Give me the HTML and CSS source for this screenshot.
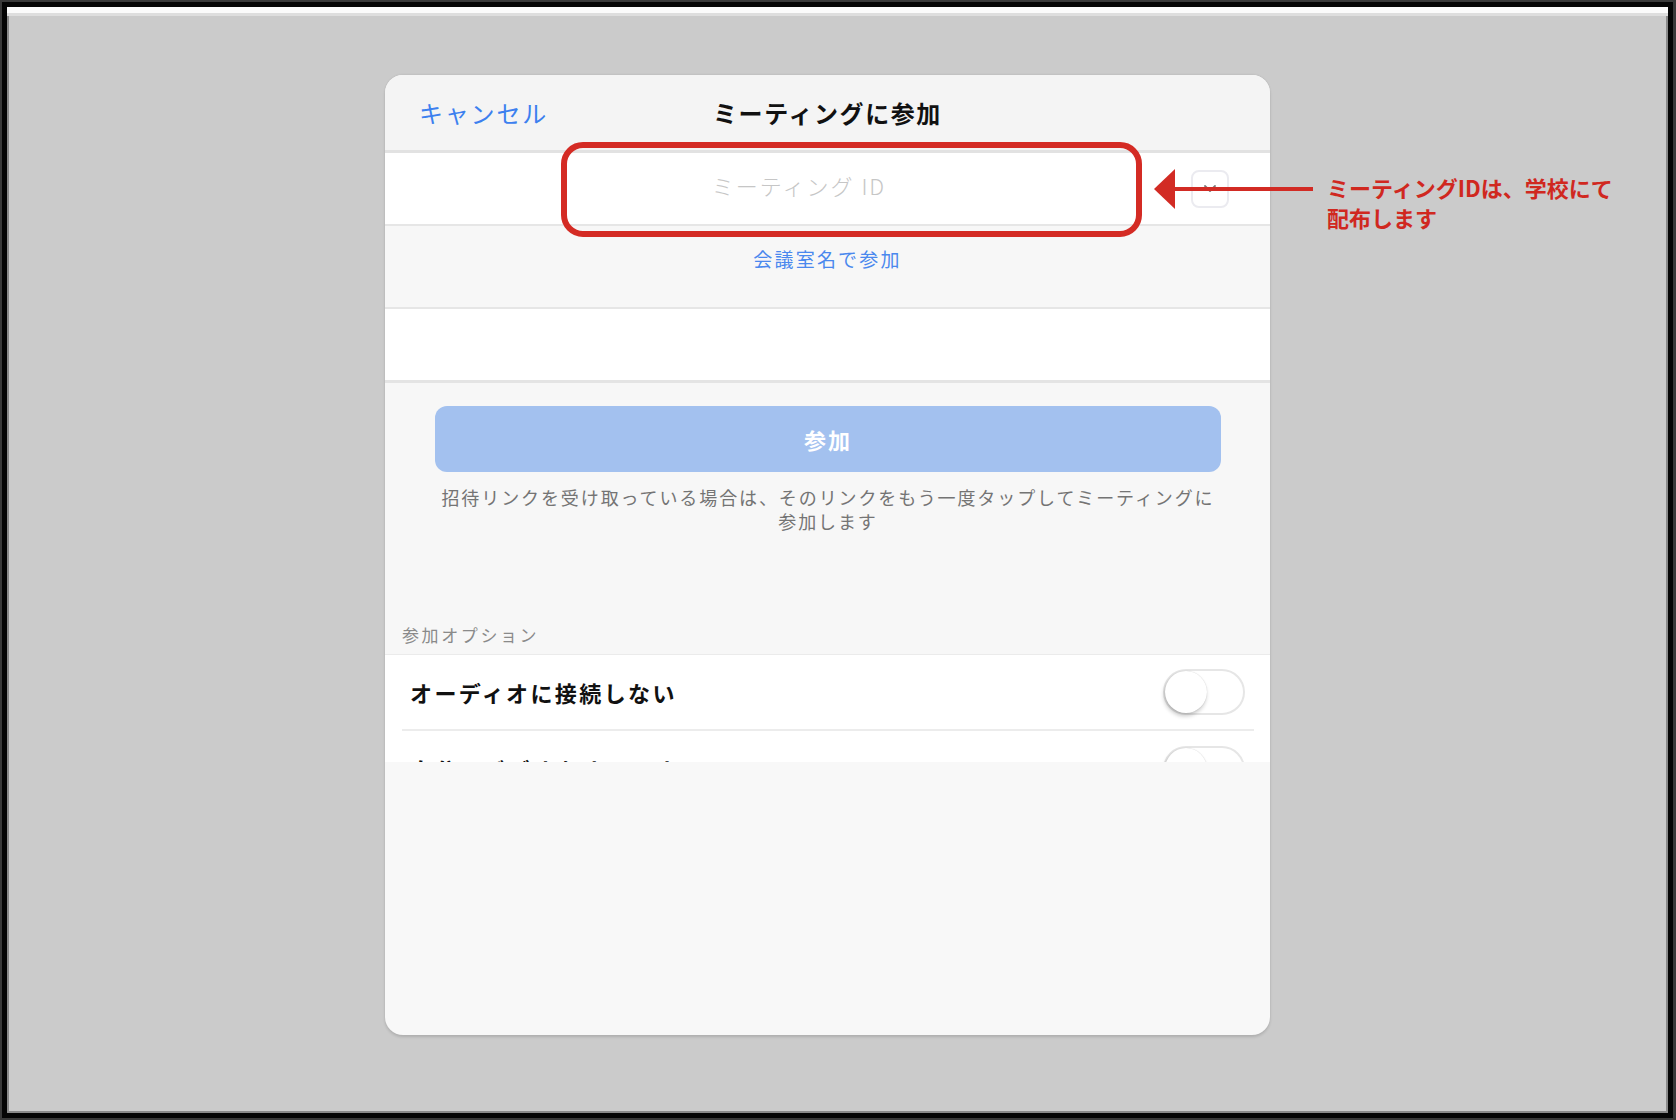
FILE: index.html
```html
<!DOCTYPE html>
<html lang="ja">
<head>
<meta charset="utf-8">
<title>ミーティングに参加</title>
<link rel="stylesheet" href="styles.css">
</head>
<body>
<div class="frame">
  <div class="card">
    <div class="hdr">
      <span class="cancel">キャンセル</span>
      <span class="title">ミーティングに参加</span>
      <span></span>
    </div>
    <div class="idrow">
      <div class="idinput">ミーティング ID</div>
      <div class="dd">
        <svg width="14" height="9" viewBox="0 0 14 9"><path d="M2 2 L7 7 L12 2" fill="none" stroke="#7a7a7a" stroke-width="1.8" stroke-linecap="round" stroke-linejoin="round"/></svg>
      </div>
    </div>
    <div class="linkrow"><span class="link">会議室名で参加</span></div>
    <div class="namerow"></div>
    <div class="joinsec">
      <div class="joinbtn">参加</div>
      <p class="help">招待リンクを受け取っている場合は、そのリンクをもう一度タップしてミーティングに<br>参加します</p>
      <div class="opthdr">参加オプション</div>
    </div>
    <div class="opts">
      <div class="optrow">
        <span class="optlabel">オーディオに接続しない</span>
        <span class="toggle"><span class="knob"></span></span>
      </div>
      <div class="optrow">
        <span class="optlabel">自分のビデオをオフにする</span>
        <span class="toggle"><span class="knob"></span></span>
      </div>
    </div>
  </div>
</div>
<div class="callout-box"></div>
<svg class="callout-arrow" width="170" height="50" viewBox="0 0 170 50">
  <rect x="20" y="22" width="143" height="4" fill="#d22b24"/>
  <polygon points="4,24 25,4 25,44" fill="#d22b24"/>
</svg>
<div class="callout-text">ミーティングIDは、学校にて<br>配布します</div>
</body>
</html>
```
FILE: styles.css
```css
html, body {
  margin: 0;
  padding: 0;
}
body {
  position: relative;
  width: 1676px;
  height: 1120px;
  background: #3a3a3a;
  font-family: "Noto Sans CJK JP", "Noto Sans", sans-serif;
  overflow: hidden;
}
.frame {
  margin: 2px 3px 2px 2px;
  height: 1116px;
  box-sizing: border-box;
  border: 5px solid #050505;
  background: #cbcbcb;
  box-shadow: inset 0 6px 0 #fbfbfb, inset 0 9px 0 #dedede, inset 2px 0 0 #8a8a8a, inset -2px 0 0 #8a8a8a, inset 0 -2px 0 #8a8a8a;
  padding-top: 68px;
  padding-left: 378px;
}
.card {
  width: 885px;
  height: 960px;
  background: #f8f8f8;
  border-radius: 18px;
  overflow: hidden;
  box-shadow: 0 2px 3px rgba(0, 0, 0, 0.14), 0 -1px 2px rgba(0, 0, 0, 0.05);
  display: flex;
  flex-direction: column;
}
.hdr {
  height: 75px;
  background: #f4f4f4;
  border-bottom: 3px solid #e2e2e2;
  display: grid;
  grid-template-columns: 1fr auto 1fr;
  align-items: center;
  flex: none;
}
.cancel {
  padding-left: 34px;
  color: #3c80ef;
  font-size: 24px;
  letter-spacing: 1.8px;
}
.title {
  color: #111;
  font-size: 24px;
  font-weight: 700;
  letter-spacing: 1.6px;
}
.idrow {
  height: 71px;
  background: #fff;
  border-bottom: 2px solid #e6e6e6;
  display: flex;
  align-items: center;
  padding-right: 41px;
  flex: none;
}
.idinput {
  flex: 1;
  text-align: center;
  padding-left: 22px;
  padding-bottom: 8px;
  color: #c6c6c6;
  font-size: 22px;
  font-weight: 300;
  letter-spacing: 2px;
}
.dd {
  width: 34px;
  height: 34px;
  border: 2px solid #ebebf0;
  border-radius: 8px;
  display: flex;
  align-items: center;
  justify-content: center;
}
.linkrow {
  height: 83px;
  background: #f7f7f7;
  border-bottom: 2px solid #e6e6e6;
  text-align: center;
  box-sizing: border-box;
  padding-top: 20px;
  flex: none;
}
.link {
  color: #4a88ee;
  font-size: 19px;
  line-height: 26px;
  letter-spacing: 2.2px;
}
.namerow {
  height: 71px;
  background: #fff;
  border-bottom: 3px solid #e4e4e4;
  flex: none;
}
.joinsec {
  height: 272px;
  box-sizing: border-box;
  background: #f7f7f7;
  border-bottom: 1px solid #ebebeb;
  padding: 23px 49px 0 50px;
  flex: none;
}
.joinbtn {
  height: 66px;
  border-radius: 12px;
  background: #a3c1ef;
  color: #fff;
  font-size: 22px;
  font-weight: 700;
  letter-spacing: 2px;
  display: flex;
  align-items: center;
  justify-content: center;
}
.help {
  margin: 13px 0 0;
  text-align: center;
  color: #747474;
  font-size: 18px;
  line-height: 24px;
  letter-spacing: 1.9px;
}
.opthdr {
  margin: 90px 0 0 -33px;
  color: #8a8a8a;
  font-size: 17px;
  line-height: 24px;
  letter-spacing: 2.6px;
}
.opts {
  height: 107px;
  overflow: hidden;
  background: #fff;
  flex: none;
}
.optrow {
  height: 74px;
  box-sizing: border-box;
  margin-left: 17px;
  margin-right: 16px;
  padding: 0 9px 0 8px;
  display: flex;
  align-items: center;
  justify-content: space-between;
}
.optrow + .optrow {
  border-top: 2px solid #ececec;
  height: 76px;
  padding-top: 2px;
}
.optlabel {
  color: #111;
  font-size: 22px;
  font-weight: 700;
  letter-spacing: 2.4px;
}
.toggle {
  width: 82px;
  height: 46px;
  box-sizing: border-box;
  border: 2px solid #e6e6e6;
  border-radius: 23px;
  background: #fff;
  display: flex;
  align-items: center;
}
.knob {
  width: 42px;
  height: 42px;
  border-radius: 50%;
  background: #fff;
  box-shadow: -1px 3px 4px rgba(0, 0, 0, 0.22), 0 0 1px rgba(0, 0, 0, 0.2);
}
.callout-box {
  position: absolute;
  left: 561px;
  top: 142px;
  width: 581px;
  height: 95px;
  box-sizing: border-box;
  border: 6px solid #d42b24;
  border-radius: 22px;
}
.callout-arrow {
  position: absolute;
  left: 1150px;
  top: 165px;
}
.callout-text {
  position: absolute;
  left: 1327px;
  top: 172px;
  color: #d0281f;
  font-size: 22px;
  font-weight: 700;
  line-height: 30px;
  white-space: nowrap;
}
```
